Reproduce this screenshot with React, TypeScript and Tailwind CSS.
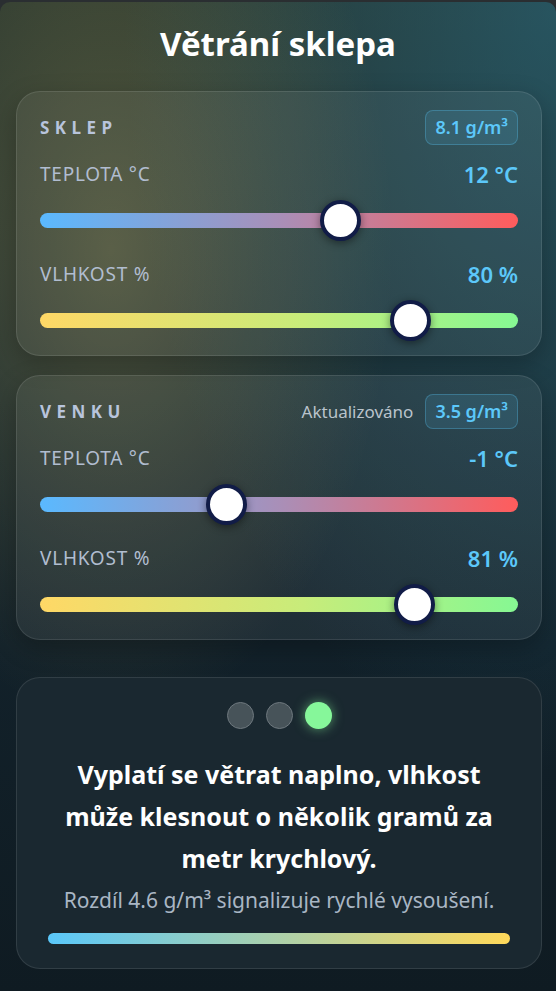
import React from "react";

const FONT = { fontFamily: '"Noto Sans", "Open Sans", sans-serif' };

type SliderProps = { frac: number; kind: "temp" | "hum" };

function Slider({ frac, kind }: SliderProps) {
  const track =
    kind === "temp"
      ? "bg-[linear-gradient(90deg,#5ab9ff_0%,#a98fb8_50%,#ff5c5c_100%)]"
      : "bg-[linear-gradient(90deg,#ffd866_0%,#c8ec7a_55%,#86f893_100%)]";
  return (
    <div className="relative h-[41px] flex items-center">
      <div className={`h-[15px] w-full rounded-full ${track}`} />
      <div
        className="absolute top-0 h-[41px] w-[41px] rounded-full bg-white border-[4px] border-[#111c47] shadow-[0_2px_8px_rgba(0,0,0,0.45)]"
        style={{ left: `calc(${frac} * (100% - 41px))` }}
      />
    </div>
  );
}

function Row({ label, value }: { label: string; value: string }) {
  return (
    <div className="flex items-center justify-between h-6">
      <span className="text-[19px] leading-6 tracking-[0.04em] text-[#b1bdd0]">{label}</span>
      <span className="text-[22px] leading-6 font-semibold text-[#5cc8fa]">{value}</span>
    </div>
  );
}

function Badge({ children }: { children: React.ReactNode }) {
  return (
    <span className="inline-flex h-[35px] items-center rounded-[8px] border border-[#5ac8fa]/30 bg-[#5ac8fa]/[0.12] px-[9px] text-[18px] font-semibold text-[#5cc8fa]">
      {children}
    </span>
  );
}

function Card({
  title,
  extra,
  badge,
  t,
  tFrac,
  h,
  hFrac,
}: {
  title: string;
  extra?: string;
  badge: string;
  t: string;
  tFrac: number;
  h: string;
  hFrac: number;
}) {
  return (
    <div className="rounded-[24px] border border-white/10 bg-white/[0.06] px-[23px] pt-[18px] pb-[14px] shadow-[0_8px_24px_rgba(0,0,0,0.25)]">
      <div className="flex items-center justify-between h-[35px]">
        <span className="text-[17px] font-bold tracking-[0.32em] text-[#b8c4dc]">{title}</span>
        <div className="flex items-center gap-3">
          {extra && <span className="text-[17px] text-[#b9c3cc]">{extra}</span>}
          <Badge>{badge}</Badge>
        </div>
      </div>
      <div className="mt-[17px]">
        <Row label="TEPLOTA °C" value={t} />
      </div>
      <div className="mt-[14px]">
        <Slider frac={tFrac} kind="temp" />
      </div>
      <div className="mt-[21px]">
        <Row label="VLHKOST %" value={h} />
      </div>
      <div className="mt-[14px]">
        <Slider frac={hFrac} kind="hum" />
      </div>
    </div>
  );
}

export default function App() {
  return (
    <div className="min-h-[991px] bg-[#2a2e31] pt-[2px]" style={FONT}>
      <div className="min-h-[989px] rounded-t-[10px] bg-[#0f1b22] bg-[radial-gradient(ellipse_at_20%_25%,rgba(255,225,110,0.22),transparent_45%),radial-gradient(ellipse_at_100%_0%,rgba(40,110,135,0.55),transparent_55%),linear-gradient(180deg,#27352f_0%,#1a2a2f_40%,#12212a_65%,#0f1b22_100%)] pb-6">
        <h1 className="pt-[22px] text-center text-[33px] leading-[40px] font-bold text-white">
          Větrání sklepa
        </h1>
        <div className="ml-4 mr-[14px] mt-[27px] flex flex-col">
          <Card
            title="SKLEP"
            badge="8.1 g/m³"
            t="12 °C"
            tFrac={0.64}
            h="80 %"
            hFrac={0.8}
          />
          <div className="mt-[19px]">
            <Card
              title="VENKU"
              extra="Aktualizováno"
              badge="3.5 g/m³"
              t="-1 °C"
              tFrac={0.38}
              h="81 %"
              hFrac={0.81}
            />
          </div>
          <div className="mt-[37px] rounded-[24px] border border-white/10 bg-[#1a2830] px-[31px] pt-[24px] pb-[24px]">
            <div className="flex justify-center gap-3">
              <span className="h-[27px] w-[27px] rounded-full border-[1.5px] border-[#6e787e] bg-[#475359]" />
              <span className="h-[27px] w-[27px] rounded-full border-[1.5px] border-[#6e787e] bg-[#475359]" />
              <span className="h-[27px] w-[27px] rounded-full bg-[#86f79a] shadow-[0_0_12px_rgba(134,247,154,0.55)]" />
            </div>
            <p className="mt-[24px] text-center text-[25px] leading-[42px] font-bold text-white">
              Vyplatí se větrat naplno, vlhkost může klesnout o několik gramů za metr krychlový.
            </p>
            <p className="mt-[8px] text-center text-[21px] leading-[26px] text-[#a9b6c4]">
              Rozdíl 4.6 g/m³ signalizuje rychlé vysoušení.
            </p>
            <div className="mt-[20px] h-[11px] rounded-full bg-[linear-gradient(90deg,#5ac8fa,#ffd95a)]" />
          </div>
        </div>
      </div>
    </div>
  );
}
